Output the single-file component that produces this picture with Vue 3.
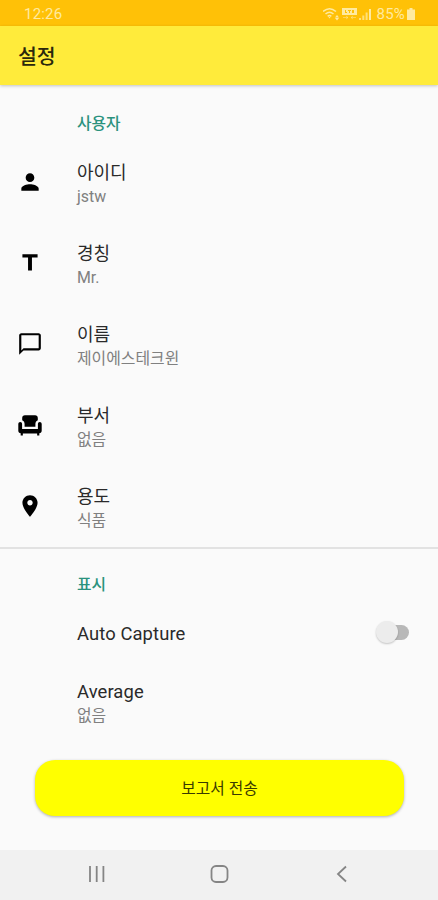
<script setup>
import { reactive } from "vue";

const state = reactive({
  autoCapture: false,
  items: [
    { icon: "person", title: "아이디", value: "jstw" },
    { icon: "title", title: "경칭", value: "Mr." },
    { icon: "chat", title: "이름", value: "제이에스테크윈" },
    { icon: "sofa", title: "부서", value: "없음" },
    { icon: "place", title: "용도", value: "식품" }
  ]
});

const icons = {
  person: "M12 12c2.21 0 4-1.79 4-4s-1.79-4-4-4-4 1.79-4 4 1.79 4 4 4zm0 2c-2.67 0-8 1.34-8 4v2h16v-2c0-2.66-5.33-4-8-4z",
  title: "M5 4v3h5.2v12h3.6V7H19V4z",
  chat: "M20 2H4c-1.1 0-2 .9-2 2v18l4-4h14c1.1 0 2-.9 2-2V4c0-1.1-.9-2-2-2zm0 14H6l-2 2V4h16v12z",
  sofa: "M4.8 7.500V5.500C4.800 4 5.800 3 7.300 3h9.400c1.500 0 2.500 1 2.500 2.500v2c-1.600.8-2.200 2-2.200 3.500v2.500H7V11c0-1.500-.6-2.700-2.200-3.500zM21 9.300c-1 0-1.700.8-1.700 1.700v4.700H4.700V11c0-.9-.7-1.700-1.700-1.700s-1.800.8-1.800 1.700v6.300c0 1.300.9 2.200 2.200 2.400V21.700h2v-1.900h13.200v1.900h2v-2c1.300-.2 2.200-1.100 2.200-2.400V11c0-.9-.8-1.700-1.800-1.700z",
  place: "M12 2C8.13 2 5 5.13 5 9c0 5.25 7 13 7 13s7-7.75 7-13c0-3.87-3.13-7-7-7zm0 9.5c-1.38 0-2.5-1.12-2.5-2.5s1.12-2.5 2.5-2.5 2.5 1.12 2.5 2.5-1.12 2.5-2.5 2.5z"
};

const toggleCapture = () => {
  state.autoCapture = !state.autoCapture;
}
</script>

<template>
  <div class="screen">
    <div class="status">
      <span class="time">12:26</span>
      <div class="indicators">
        <svg class="wifi" width="18" height="14" viewBox="0 0 18 14">
          <path d="M0 4.500Q6.500-1 13 4.500M2.500 7Q6.500 3.500 10.500 7M4.700 9.300Q6.500 7.800 8.300 9.300" fill="none" stroke="currentColor" stroke-width="1.5" />
          <path d="M5.500 10h2l-1 1.500zM14 8l2 2.500h-4zM14 13.500l2-2.500h-4z" fill="currentColor" />
        </svg>
        <svg class="lte" width="15" height="12" viewBox="0 0 15 12">
          <path fill-rule="evenodd" d="M0 0h15v7H0zM3 2v3h2V4H4V2zM6 2v1h1v2h1V3h1V2zM10 2v3h2V2z" fill="currentColor" />
          <path d="M1 9.5h5M4 8l2 1.5L4 11M14 9.5H9M11 8L9 9.5 11 11" fill="none" stroke="currentColor" opacity=".5" />
        </svg>
        <svg class="signal" width="14" height="13" viewBox="0 0 14 13">
          <path d="M1 10h2v2H1zM4.3 7.5h2V12h-2zM7.6 4.5h2V12h-2z" fill="currentColor" opacity=".75" />
          <path d="M11 1h2v11h-2z" fill="currentColor" />
        </svg>
        <span class="percent">85%</span>
        <svg class="battery" width="8" height="12" viewBox="0 0 8 12">
          <path d="M2.5 0h3v1.500H8V12H0V1.500h2.500z" fill="currentColor" />
        </svg>
      </div>
    </div>
    <div class="toolbar">설정</div>

    <div class="content">
      <div class="category">사용자</div>
      <div v-for="item in state.items" :key="item.title" class="row">
        <svg class="icon" width="26" height="26" viewBox="0 0 24 24">
          <path :d="icons[item.icon]" />
        </svg>
        <div class="text">
          <div class="name">{{ item.title }}</div>
          <div class="value">{{ item.value }}</div>
        </div>
      </div>

      <div class="divider"></div>
      <div class="category display">표시</div>
      <div class="row capture" @click="toggleCapture">
        <div class="name latin">Auto Capture</div>
        <div class="switch" :class="state.autoCapture ? 'on' : ''">
          <div class="thumb"></div>
        </div>
      </div>
      <div class="row average">
        <div class="text">
          <div class="name latin">Average</div>
          <div class="value">없음</div>
        </div>
      </div>
      <button class="send">보고서 전송</button>
    </div>

    <div class="nav">
      <svg width="20" height="20" viewBox="0 0 20 20">
        <path d="M3 2v16M9.7 2v16M16.4 2v16" />
      </svg>
      <svg width="20" height="20" viewBox="0 0 20 20">
        <rect x="1.5" y="2" width="16" height="16" rx="4.5" />
      </svg>
      <svg width="20" height="20" viewBox="0 0 20 20">
        <path d="M14 2.5L6 10l8 7.5" />
      </svg>
    </div>
  </div>
</template>

<style>
body {
  margin: 0;
  background-color: #fafafa;
}
</style>

<style scoped>
.screen {
  display: flex;
  flex-direction: column;
  width: 438px;
  height: 900px;
  overflow: hidden;
  background-color: #fafafa;
  color: #2a2a2a;
  font-family: Roboto, "Noto Sans CJK KR", sans-serif;
}

.status {
  display: flex;
  flex: none;
  align-items: center;
  justify-content: space-between;
  box-sizing: border-box;
  height: 26px;
  padding: 2px 23px 0 24px;
  background-color: #ffc107;
  color: #ffeaa0;
  font-size: 15px;
}

.time {
  letter-spacing: 0.2px;
}

.indicators {
  display: flex;
  align-items: center;
}

.wifi,
.lte {
  margin-top: -1px;
}

.lte {
  margin-left: 1px;
}

.signal {
  margin-left: 1px;
}

.percent {
  margin-left: 5px;
  letter-spacing: 0.2px;
}

.battery {
  margin-left: 2px;
}

.toolbar {
  display: flex;
  flex: none;
  position: relative;
  align-items: center;
  box-sizing: border-box;
  height: 59px;
  padding: 0 18px 1px;
  background-color: #ffeb3b;
  box-shadow: 0 1px 3px rgba(0, 0, 0, 0.22);
  color: #2a270c;
  font-size: 20.5px;
  font-weight: 500;
}

.content {
  display: flex;
  flex: 1;
  flex-direction: column;
}

.category {
  height: 20px;
  margin-top: 29px;
  padding-left: 77px;
  color: #2a927d;
  font-size: 15.8px;
  font-weight: 500;
  line-height: 20px;
}

.row {
  display: flex;
  flex: none;
  align-items: center;
  box-sizing: border-box;
  height: 81px;
  padding-left: 17px;
}

.row:nth-child(2) {
  margin-top: 8px;
}

.icon {
  flex: none;
  margin: -2px 34px 0 0;
}

.text {
  padding-top: 2px;
}

.name {
  font-size: 18px;
  line-height: 25px;
}

.latin {
  font-size: 18.4px;
  letter-spacing: 0.1px;
}

.value {
  color: #808080;
  font-size: 15.9px;
  line-height: 23px;
}

.divider {
  flex: none;
  height: 2px;
  background-color: #e2e2e2;
}

.display {
  margin-top: 26px;
}

.capture {
  justify-content: space-between;
  height: 58px;
  margin-top: 9px;
  padding: 0 29px 0 77px;
}

.average {
  height: 80px;
  padding-left: 77px;
}

.switch {
  display: flex;
  align-items: center;
  width: 29px;
  height: 15px;
  margin: -2px 0 0 auto;
  border-radius: 8px;
  background-color: #b8b8b8;
}

.thumb {
  flex: none;
  width: 22px;
  height: 22px;
  margin-left: -4px;
  border-radius: 50%;
  background-color: #ececec;
  box-shadow: 0 1px 2px rgba(0, 0, 0, 0.22);
}

.on .thumb {
  margin-left: 12px;
}

.send {
  height: 56px;
  margin: 18px 34px 0 35px;
  padding-bottom: 3px;
  border: none;
  border-radius: 20px;
  background-color: #ffff00;
  box-shadow: 0 1px 3px rgba(0, 0, 0, 0.3);
  color: #3a3a00;
  font-family: inherit;
  font-size: 15.8px;
}

.nav {
  display: flex;
  flex: none;
  align-items: center;
  justify-content: space-between;
  box-sizing: border-box;
  height: 50px;
  padding: 0 86px 2px 87px;
  background-color: #f1f1f1;
}

.nav svg {
  fill: none;
  stroke: #858585;
  stroke-width: 1.8;
}
</style>
